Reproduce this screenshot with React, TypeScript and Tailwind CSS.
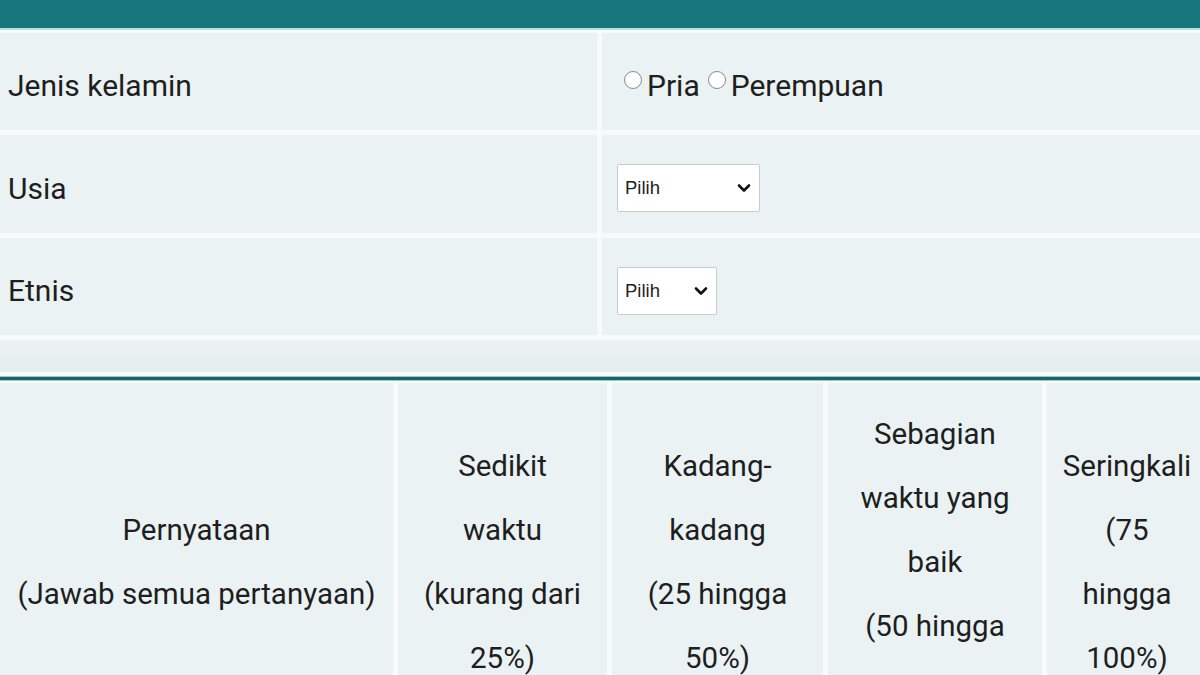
import React from "react";

function Chevron() {
  return (
    <svg width="14" height="10" viewBox="0 0 14 10" className="shrink-0">
      <path d="M2 2.5 L7 7.5 L12 2.5" fill="none" stroke="#111" strokeWidth="2.6" strokeLinecap="round" strokeLinejoin="round" />
    </svg>
  );
}

function Select({ w }: { w: string }) {
  return (
    <div className={`${w} h-[48px] bg-white border border-[#c9cccd] rounded-[2px] flex items-center justify-between pl-[7px] pr-[8px] font-['Liberation_Sans',Arial,sans-serif] text-[18.5px] text-[#222]`}>
      <span>Pilih</span>
      <Chevron />
    </div>
  );
}

function Radio() {
  return <span className="inline-block w-[18px] h-[18px] rounded-full border border-[#8a8a8a] bg-white self-start mt-[8px] mr-[5px]" />;
}

export default function App() {
  return (
    <div className="w-[1200px] h-[675px] overflow-hidden bg-[#f7fbfb] font-['Roboto','Noto_Sans',sans-serif] text-[#1e1e1e]">
      <div className="h-[28px] bg-[#17767b]" />
      <div className="h-[2px] bg-[#b8e0e1]" />
      <div className="pt-[3px] flex flex-col gap-[5px]">
        <div className="grid grid-cols-[597px_1fr] gap-[5px] h-[97px]">
          <div className="bg-[#eaf2f3] flex items-center pl-[8px] pt-[8px] text-[30px]">Jenis kelamin</div>
          <div className="bg-[#eaf2f3] flex items-center pl-[22px] pt-[8px] text-[30px]">
            <div className="flex items-start">
              <Radio />
              <span>Pria</span>
              <span className="w-[8px]" />
              <Radio />
              <span>Perempuan</span>
            </div>
          </div>
        </div>
        <div className="grid grid-cols-[597px_1fr] gap-[5px] h-[98px]">
          <div className="bg-[#eaf2f3] flex items-center pl-[8px] pt-[8px] text-[30px]">Usia</div>
          <div className="bg-[#eaf2f3] flex items-center pl-[15px] pt-[8px]">
            <Select w="w-[143px]" />
          </div>
        </div>
        <div className="grid grid-cols-[597px_1fr] gap-[5px] h-[97px]">
          <div className="bg-[#eaf2f3] flex items-center pl-[8px] pt-[8px] text-[30px]">Etnis</div>
          <div className="bg-[#eaf2f3] flex items-center pl-[15px] pt-[8px]">
            <Select w="w-[100px]" />
          </div>
        </div>
        <div className="h-[32px] bg-gradient-to-b from-[#edf3f4] to-[#e6edef]" />
      </div>
      <div className="mt-[4px] h-[1px] bg-[#8fcfd2]" />
      <div className="h-[3px] bg-[#1f6165]" />
      <div className="h-[1px] bg-[#8fcfd2]" />
      <div className="pt-[2px] grid grid-cols-[393px_209px_211px_214px_170px] gap-[5px] text-[29.5px] leading-[64px] text-center">
        <div className="bg-[#eaf2f3] h-[358px] flex items-center justify-center">
          <div>Pernyataan<br />(Jawab semua pertanyaan)</div>
        </div>
        <div className="bg-[#eaf2f3] h-[358px] flex items-center justify-center">
          <div>Sedikit<br />waktu<br />(kurang dari<br />25%)</div>
        </div>
        <div className="bg-[#eaf2f3] h-[358px] flex items-center justify-center">
          <div>Kadang-<br />kadang<br />(25 hingga<br />50%)</div>
        </div>
        <div className="bg-[#eaf2f3] h-[358px] flex items-center justify-center">
          <div>Sebagian<br />waktu yang<br />baik<br />(50 hingga<br />75%)</div>
        </div>
        <div className="bg-[#eaf2f3] h-[358px] flex items-center justify-center">
          <div className="pr-[10px]">Seringkali<br />(75<br />hingga<br />100%)</div>
        </div>
      </div>
    </div>
  );
}
